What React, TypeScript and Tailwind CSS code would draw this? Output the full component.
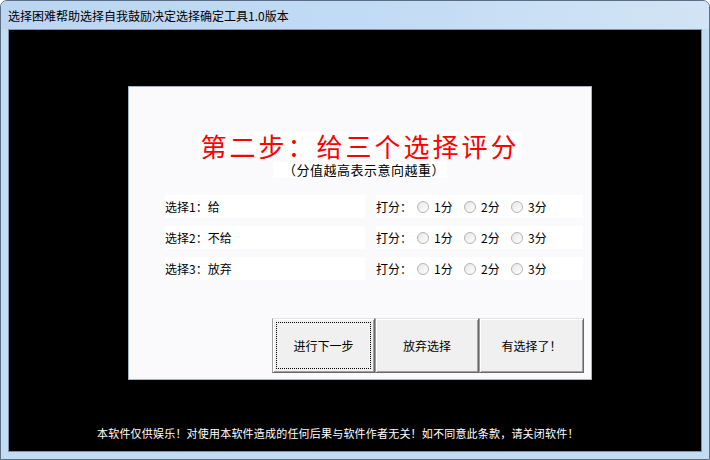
import { useState } from 'react';

const cjk = "font-['SimSun','Noto_Sans_CJK_SC',sans-serif]";

const rows = [
    { label: '选择1：给' },
    { label: '选择2：不给' },
    { label: '选择3：放弃' },
];

// classic win32 radio circle
const Radio = ({ checked, onClick }: { checked: boolean; onClick: () => void }) => (
    <span
        onClick={onClick}
        className="w-[12px] h-[12px] rounded-full border border-[#b4b4b4] bg-gradient-to-br from-[#e6e6e6] to-white flex items-center justify-center shrink-0"
    >
        {checked && <span className="w-[4px] h-[4px] rounded-full bg-[#1a1a1a]" />}
    </span>
);

const ScoreRow = ({ label }: { label: string }) => {
    const [score, setScore] = useState(0);
    return (
        <div className="flex items-center h-[23px]">
            <div className="w-[200px] h-full bg-white flex items-center">{label}</div>
            <div className="ml-[11px] w-[207px] h-full bg-white flex items-center">
                <span className="w-[41px]">打分：</span>
                {[1, 2, 3].map((n) => (
                    <label key={n} className="flex items-center w-[47px]">
                        <Radio checked={score === n} onClick={() => setScore(n)} />
                        <span className="ml-[5px]">{n}分</span>
                    </label>
                ))}
            </div>
        </div>
    );
};

const WinButton = ({ text, focused }: { text: string; focused?: boolean }) => (
    <button className="h-[55px] bg-[#f0f0f0] border border-t-[#e3e3e3] border-l-[#a0a0a0] border-r-[#696969] border-b-[#696969] shadow-[inset_1px_1px_0_#ffffff,inset_-1px_-1px_0_#a0a0a0] p-[3px] text-[12px] text-black">
        <span
            className={`w-full h-full flex items-center justify-center ${
                focused ? 'border border-dotted border-black' : ''
            }`}
        >
            {text}
        </span>
    </button>
);

export default function App() {
    return (
        <div className={`w-[710px] h-[460px] flex flex-col bg-[#c4dcf2] border border-[#5a6f86] rounded-t-[7px] overflow-hidden ${cjk} text-[12px] text-black`}>
            {/* title bar */}
            <div className="h-[28px] shrink-0 flex items-center pl-[7px] bg-gradient-to-r from-[#bcd6f1] via-[#c1dbf4] to-[#d2e4f5]">
                <span className="text-[12px] pt-[1px]">选择困难帮助选择自我鼓励决定选择确定工具1.0版本</span>
            </div>

            <div className="flex flex-1 px-[7px]">
                <div className="flex-1 bg-black border border-[#7f93aa] flex flex-col">
                    {/* main panel */}
                    <div className="ml-[119px] mt-[56px] w-[464px] h-[294px] bg-[#fafafd] border border-[#a5b4c4] flex flex-col">
                        <div className="mt-[45px] flex justify-center">
                            <div className="bg-white px-[2px] text-[26px] leading-[28px] text-[#ff0000] tracking-[3px]">
                                第二步：给三个选择评分
                            </div>
                        </div>
                        <div className="mt-[2px] flex justify-center">
                            <div className="bg-white px-[2px] pl-[10px] text-[13px] leading-[16px] tracking-[0.5px]">
                                （分值越高表示意向越重）
                            </div>
                        </div>

                        <div className="ml-[36px] mt-[17px] flex flex-col gap-[8px]">
                            {rows.map((r) => (
                                <ScoreRow key={r.label} label={r.label} />
                            ))}
                        </div>

                        <div className="mt-auto mb-[6px] ml-[143px] grid grid-cols-[103px_104px_105px]">
                            <WinButton text="进行下一步" focused />
                            <WinButton text="放弃选择" />
                            <WinButton text="有选择了！" />
                        </div>
                    </div>

                    <div className="mt-[45px] pl-[88px] text-white text-[11px] tracking-[0.2px]">
                        本软件仅供娱乐！对使用本软件造成的任何后果与软件作者无关！如不同意此条款，请关闭软件！
                    </div>
                </div>
            </div>
            <div className="h-[7px] shrink-0" />
        </div>
    );
}
